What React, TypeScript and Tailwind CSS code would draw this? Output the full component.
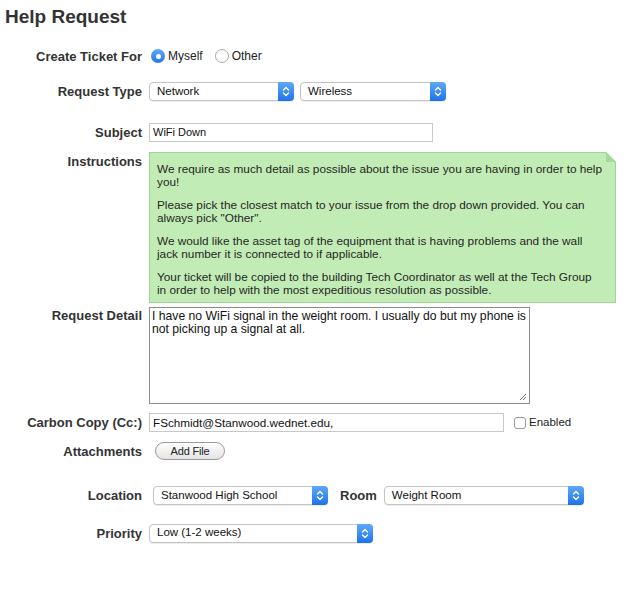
import React from "react";

const font = { fontFamily: '"Liberation Sans", Arial, sans-serif' };

function Label({ children, className = "" }: { children: React.ReactNode; className?: string }) {
  return (
    <div className={`w-[142px] shrink-0 text-right text-[13px] font-bold leading-[15px] text-[#333] ${className}`}>
      {children}
    </div>
  );
}

function Select({ value, width }: { value: string; width: string }) {
  return (
    <div
      className={`flex h-[19px] items-center justify-between rounded-[4px] border border-[#c4c4c4] bg-white shadow-[0_1px_1px_rgba(0,0,0,0.08)] ${width}`}
    >
      <span className="pl-[7px] text-[11.5px] text-[#111]">{value}</span>
      <span className="-mr-px flex h-[19px] w-[16px] items-center justify-center rounded-r-[4px] bg-gradient-to-b from-[#5fa8fb] to-[#1a73ea]">
        <svg width="8" height="11" viewBox="0 0 8 11" fill="none" stroke="white" strokeWidth="1.4" strokeLinecap="round" strokeLinejoin="round">
          <path d="M1.5 4 L4 1.5 L6.5 4" />
          <path d="M1.5 7 L4 9.5 L6.5 7" />
        </svg>
      </span>
    </div>
  );
}

function Radio({ checked, label }: { checked: boolean; label: string }) {
  return (
    <label className="flex items-center gap-[3px] text-[12px] text-[#222]">
      {checked ? (
        <span className="flex h-[14px] w-[14px] items-center justify-center rounded-full bg-gradient-to-b from-[#5ea7fa] to-[#2277ec]">
          <span className="h-[5px] w-[5px] rounded-full bg-white" />
        </span>
      ) : (
        <span className="h-[14px] w-[14px] rounded-full border border-[#a8a8a8] bg-white" />
      )}
      {label}
    </label>
  );
}

const corner = { clipPath: "polygon(0 0, calc(100% - 10px) 0, 100% 10px, 100% 100%, 0 100%)" };

export default function App() {
  return (
    <div className="min-h-[605px] w-[632px] bg-white" style={font}>
      <h1 className="pl-[5px] pt-[5px] text-[19px] font-bold leading-[24px] text-[#333]">Help Request</h1>

      {/* Create ticket for */}
      <div className="mt-[18px] flex items-center">
        <Label>Create Ticket For</Label>
        <div className="ml-[9px] flex items-center gap-[12px]">
          <Radio checked label="Myself" />
          <Radio checked={false} label="Other" />
        </div>
      </div>

      {/* Request type */}
      <div className="mt-[17px] flex items-center">
        <Label>Request Type</Label>
        <div className="ml-[7px] flex items-center gap-[6px]">
          <Select value="Network" width="w-[145px]" />
          <Select value="Wireless" width="w-[146px]" />
        </div>
      </div>

      {/* Subject */}
      <div className="mt-[22px] flex items-center">
        <Label>Subject</Label>
        <div className="ml-[7px] flex h-[19px] w-[284px] items-center border border-[#c8c8c8] bg-white pl-[3px] text-[11px] text-[#111]">
          WiFi Down
        </div>
      </div>

      {/* Instructions */}
      <div className="mt-[10px] flex items-start">
        <Label className="pt-[2px]">Instructions</Label>
        <div className="relative ml-[7px] h-[151px] w-[467px]">
          <div className="h-full w-full bg-[#9fd591] p-px" style={corner}>
            <div
              className="h-full w-full whitespace-nowrap bg-[#c2ecb5] px-[7px] pt-[10px] text-[11.8px] leading-[13px] text-[#262626]"
              style={corner}
            >
              <p>
                We require as much detail as possible about the issue you are having in order to help
                <br />
                you!
              </p>
              <p className="mt-[10px]">
                Please pick the closest match to your issue from the drop down provided. You can
                <br />
                always pick "Other".
              </p>
              <p className="mt-[10px]">
                We would like the asset tag of the equipment that is having problems and the wall
                <br />
                jack number it is connected to if applicable.
              </p>
              <p className="mt-[10px]">
                Your ticket will be copied to the building Tech Coordinator as well at the Tech Group
                <br />
                in order to help with the most expeditious resolution as possible.
              </p>
            </div>
          </div>
          <div
            className="absolute right-0 top-0 h-[10px] w-[10px] bg-[#a6d898]"
            style={{ clipPath: "polygon(0 0, 0 100%, 100% 100%)" }}
          />
        </div>
      </div>

      {/* Request detail */}
      <div className="mt-[4px] flex items-start">
        <Label className="pt-[1px]">Request Detail</Label>
        <div className="relative ml-[7px] h-[97px] w-[381px] border border-[#8c8c8c] bg-white px-[2px] pt-[2px] text-[12.2px] leading-[13px] text-[#111]">
          I have no WiFi signal in the weight room. I usually do but my phone is not picking up a signal at all.
          <svg className="absolute bottom-[2px] right-[2px]" width="8" height="8" viewBox="0 0 8 8" stroke="#777" strokeWidth="1">
            <path d="M7 1 L1 7 M7 4 L4 7" />
          </svg>
        </div>
      </div>

      {/* Carbon copy */}
      <div className="mt-[9px] flex items-center">
        <Label>Carbon Copy (Cc:)</Label>
        <div className="ml-[7px] flex h-[19px] w-[355px] items-center border border-[#c8c8c8] bg-white pl-[3px] text-[11.7px] text-[#111]">
          FSchmidt@Stanwood.wednet.edu,
        </div>
        <label className="ml-[10px] flex items-center gap-[3px] text-[11.5px] text-[#222]">
          <span className="h-[12px] w-[12px] rounded-[3px] border border-[#9a9a9a] bg-white" />
          Enabled
        </label>
      </div>

      {/* Attachments */}
      <div className="mt-[10px] flex items-center">
        <Label>Attachments</Label>
        <button className="ml-[13px] flex h-[18px] w-[70px] items-center justify-center rounded-full border border-[#9a9a9a] bg-gradient-to-b from-white to-[#e4e4e4] text-[11px] tracking-[-0.2px] text-[#222]">
          Add File
        </button>
      </div>

      {/* Location / Room */}
      <div className="mt-[26px] flex items-center">
        <Label>Location</Label>
        <div className="ml-[11px] flex items-center">
          <Select value="Stanwood High School" width="w-[175px]" />
          <span className="ml-[12px] text-[13px] font-bold text-[#333]">Room</span>
          <div className="ml-[7px]">
            <Select value="Weight Room" width="w-[200px]" />
          </div>
        </div>
      </div>

      {/* Priority */}
      <div className="mt-[18px] flex items-center">
        <Label>Priority</Label>
        <div className="ml-[7px]">
          <Select value="Low (1-2 weeks)" width="w-[224px]" />
        </div>
      </div>
    </div>
  );
}
